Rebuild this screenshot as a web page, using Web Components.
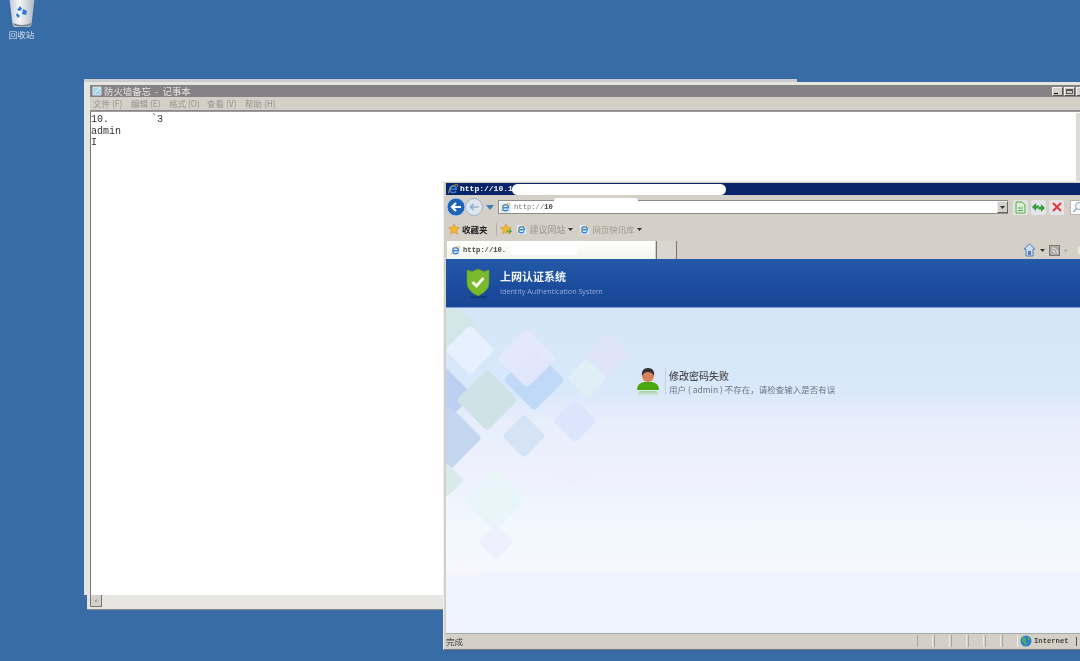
<!DOCTYPE html>
<html lang="zh">
<head>
<meta charset="utf-8">
<title>desktop</title>
<style>
  html, body { margin: 0; height: 100%; background: #376ca6; overflow: hidden; }
</style>
</head>
<body>
<win-desktop>
  <desk-icon label="回收站"></desk-icon>
  <note-window title="防火墙备忘 - 记事本">10.       `3
admin
I</note-window>
  <ie-window>
    <auth-page></auth-page>
  </ie-window>
</win-desktop>

<script>
(function() {
  const CJK = '"Noto Sans CJK SC", "Noto Sans", sans-serif';

  // the blue e with its orange swoosh, with or without a page behind it
  const ieIcon = (s, page) => `<svg width="${s}" height="${s}" viewBox="0 0 16 16" style="flex:none">
    ${page === false ? "" : '<rect x="1" y="1" width="14" height="14" rx="2" fill="#eef3f8" stroke="#b9c4d0" stroke-width=".6"/>'}
    <path d="M3.800 8.300h8.600Q12.400 4 8.200 4 3.800 4 3.800 8.600q0 4.200 4.400 4.200 2.800 0 3.900-2" fill="none" stroke="#2f86d8" stroke-width="2"/>
    <path d="M1.800 14Q3 6 10 2.800q3.400-1.600 4.200-.4.500 1-.9 3" fill="none" stroke="#e8ab3a" stroke-width="1.100"/></svg>`;

  const star = (s, extra) => `<svg width="${s}" height="${s}" viewBox="0 0 16 16" style="flex:none">
    <path d="M8 1l2.200 4.600 5 .7-3.600 3.500.9 5L8 12.400l-4.500 2.400.9-5L.8 6.300l5-.7z" fill="#f3b52c" stroke="#c88a1c" stroke-width=".6"/>${extra || ""}</svg>`;

  const arrow = `<svg width="5" height="3" viewBox="0 0 5 3" style="flex:none"><path d="M0 0h5L2.500 3z" fill="#333"/></svg>`;

  class WinDesktop extends HTMLElement {
    constructor() {
      super();
      this.attachShadow({ mode: "open" }).innerHTML = `
      <style>
      :host { display: block; position: relative; width: 1080px; height: 661px; overflow: hidden; background: #376ca6; filter: blur(.7px); }
      </style>
      <slot></slot>`;
    }
  }

  class DeskIcon extends HTMLElement {
    constructor() {
      super();
      this.attachShadow({ mode: "open" }).innerHTML = `
      <style>
      :host { position: absolute; left: 4px; top: -2px; width: 35px; display: flex; flex-direction: column; align-items: center; gap: 1px; }
      .label { font: 8.500px/10px ${CJK}; color: #d5e2f0; white-space: nowrap; }
      </style>
      <svg width="26" height="30" viewBox="0 0 26 30">
        <defs><linearGradient id="bin" x1="0" x2="1" y1="0" y2="0"><stop offset="0" stop-color="#c4ccd2"/><stop offset=".4" stop-color="#f4f7f9"/><stop offset="1" stop-color="#aeb6bd"/></linearGradient></defs>
        <path d="M.5 1h25l-3 25q-.3 3-3 3H6.500q-2.700 0-3-3z" fill="url(#bin)"/>
        <path d="M4 25q9 4 18 0l-.4 2.500q-8.600 2.500-17 0z" fill="#7d858c"/>
        <path d="M8 12l3-4 2 3-2 2zM14 11l4 2-1 4-4-1zM8 15l3 3-2 2-2-3z" fill="#2f78d0"/>
      </svg>
      <div class="label"></div>`;
    }
    connectedCallback() {
      this.shadowRoot.querySelector(".label").textContent = this.getAttribute("label");
    }
  }

  class NoteWindow extends HTMLElement {
    constructor() {
      super();
      this.attachShadow({ mode: "open" }).innerHTML = `
      <style>
      :host { position: absolute; left: 84px; top: 82px; width: 1010px; height: 528px; background: #e6e4df; box-sizing: border-box; padding: 3px 0 2px 6px; display: flex; flex-direction: column; border-bottom: 1px solid #8a8a8a; font-family: ${CJK}; }
      .sliver { position: absolute; left: 0; top: -3px; width: 713px; height: 3px; background: #c9cbd0; }
      .notch { position: absolute; left: 0; top: 513px; width: 3px; height: 15px; background: #376ca6; }
      .bar { height: 12px; background: #858285; display: flex; align-items: center; color: #e4e2e2; font-size: 9.400px; line-height: 12px; padding-left: 2px; gap: 2px; flex: none; }
      .bar .t { flex: 1; white-space: pre; margin-top: -1px; }
      .btns { display: flex; gap: 1px; padding-right: 7px; }
      .btns i { width: 11px; height: 9px; background: #d4d0c8; border: 1px solid #f2f2f2; border-right-color: #555; border-bottom-color: #555; box-sizing: border-box; display: block; position: relative; }
      .btns i.min::after { content: ""; position: absolute; left: 1px; bottom: 1px; width: 4px; height: 1px; background: #000; }
      .btns i.max::after { content: ""; position: absolute; inset: 1px; border: 1px solid #555; border-top-width: 2px; box-sizing: border-box; }
      .menu { height: 14px; flex: none; background: #d4d0c8; display: flex; align-items: center; gap: 9px; padding: 0 0 1px 3px; font-size: 8.500px; color: #96948e; border-bottom: 1px solid #8b8985; box-sizing: border-box; white-space: nowrap; }
      .menu span { width: 29px; }
      .edit { flex: 1; min-height: 0; background: #fff; border-left: 1px solid #777; border-top: 1px solid #9c9c9c; display: flex; }
      pre { margin: 0; flex: 1; padding: 2px 0 0 0; font: 10px/11.500px "Liberation Mono", monospace; color: #333; }
      .hs { height: 12px; flex: none; background: #e7e6e2; display: flex; align-items: stretch; }
      .hs b { width: 12px; border: 1px solid #777; border-top: 0; box-sizing: border-box; background: #d4d0c8; font: 6px/10px "Liberation Sans", sans-serif; color: #333; text-align: center; }
      .right { position: absolute; left: 992px; top: 31px; width: 4px; height: 480px; background: #dedcd7; }
      </style>
      <div class="sliver"></div><div class="notch"></div>
      <div class="bar">
        <svg width="10" height="10" viewBox="0 0 10 10"><path d="M1 1h8v8H1z" fill="#9fd3e6" stroke="#e8f4f8" stroke-width=".8"/><path d="M3 7L8 2" stroke="#fff" stroke-width="1"/></svg>
        <span class="t"></span>
        <div class="btns"><i class="min"></i><i class="max"></i><i></i></div>
      </div>
      <div class="menu"><span>文件 (F)</span><span>编辑 (E)</span><span>格式 (O)</span><span>查看 (V)</span><span>帮助 (H)</span></div>
      <div class="edit"><pre><slot></slot></pre></div>
      <div class="hs"><b>‹</b></div>
      <div class="right"></div>`;
    }
    connectedCallback() {
      this.shadowRoot.querySelector(".t").textContent = this.getAttribute("title").replace(" - ", "  -  ");
    }
  }

  class IeWindow extends HTMLElement {
    constructor() {
      super();
      this.attachShadow({ mode: "open" }).innerHTML = `
      <style>
      :host { position: absolute; left: 443px; top: 181px; width: 660px; height: 469px; box-sizing: border-box; padding: 1px 0 1px 2px; background: #d4d0c8; border-left: 1px solid #f0f0f0; border-top: 1px solid #f0f0f0; border-bottom: 1px solid #777; display: flex; flex-direction: column; font-family: ${CJK}; }
      .title { height: 12px; flex: none; background: #0a246a; display: flex; align-items: center; gap: 1px; color: #fff; font: bold 8px/12px "Liberation Mono", monospace; position: relative; padding-left: 1px; }
      .mask { position: absolute; background: #fff; }
      .m1 { left: 66px; top: 1px; width: 214px; height: 11px; border-radius: 6px; }
      .nav { height: 24px; flex: none; display: flex; align-items: center; padding-left: 1px; gap: 2px; position: relative; }
      .addr { width: 510px; height: 14px; box-sizing: border-box; background: #fff; border: 1px solid #8c8c8c; border-right: 0; display: flex; align-items: center; gap: 3px; padding-left: 1px; font: 7.200px/12px "Liberation Mono", monospace; color: #777; position: relative; margin-left: 1px; }
      .addr b { color: #444; }
      .addr .drop { position: absolute; right: 0; top: 0; width: 11px; height: 12px; background: #d4d0c8; border: 1px solid #666; border-top-color: #eee; border-left-color: #eee; box-sizing: border-box; display: flex; align-items: center; justify-content: center; }
      .m2 { left: 55px; top: -3px; width: 84px; height: 4px; border-radius: 3px 3px 0 0; }
      .tool { width: 15px; height: 15px; background: #e3e4e8; border-radius: 2px; display: flex; align-items: center; justify-content: center; flex: none; margin-left: 1px; }
      .tool.first { margin-left: 3px; }
      .search { margin-left: 4px; width: 30px; height: 15px; background: #fff; border: 1px solid #b5b5b5; box-sizing: border-box; display: flex; align-items: center; padding-left: 1px; flex: none; }
      .favs { height: 20px; flex: none; display: flex; align-items: center; font-size: 9px; white-space: nowrap; color: #9a9892; padding-left: 2px; }
      .favs .strong { color: #222; font-size: 8.500px; font-weight: 700; margin: 0 8px 0 0; }
      .favs .sep { width: 1px; height: 13px; background: #b5b2aa; margin-right: 3px; }
      .favs .narrow { font-size: 8.400px; }
      .tabs { height: 20px; flex: none; display: flex; align-items: flex-end; padding-left: 1px; box-sizing: border-box; }
      .tab { width: 208px; height: 18px; background: linear-gradient(#fff, #f4f3f0); display: flex; align-items: center; gap: 2px; font: bold 7.200px/12px "Liberation Mono", monospace; color: #444; padding-left: 3px; box-sizing: border-box; position: relative; flex: none; }
      .m3 { left: 64px; top: 3px; width: 67px; height: 11px; border-radius: 4px; }
      .newtab { width: 21px; height: 18px; box-sizing: border-box; border: 1px solid #77756f; border-width: 0 1px; margin-left: 1px; background: #d9d6cf; flex: none; }
      .tabtools { display: flex; align-items: center; gap: 4px; margin-left: 346px; height: 18px; }
      .tabtools u { width: 5px; height: 7px; background: #e8e7e3; margin-left: 6px; flex: none; }
      .page { flex: 1; min-height: 0; display: flex; flex-direction: column; }
      .status { height: 14px; flex: none; display: flex; align-items: center; font-size: 8.500px; color: #444; border-top: 1px solid #aaa; }
      .status .done { width: 471px; flex: none; }
      .status .cell { width: 16px; height: 12px; box-sizing: border-box; border-left: 1px solid #a8a6a0; border-right: 1px solid #ecebe7; margin-right: 1px; flex: none; }
      .status .net { display: flex; align-items: center; gap: 2px; margin-left: 1px; font: bold 7.200px/12px "Liberation Mono", monospace; white-space: nowrap; }
      .status .net i { width: 1px; height: 9px; background: #555; margin-left: 5px; }
      </style>
      <div class="title">${ieIcon(12, false)}<span>http://10.1</span><div class="mask m1"></div></div>
      <div class="nav">
        <svg width="36" height="22" viewBox="0 0 36 22" style="flex:none">
          <circle cx="27" cy="11" r="8.500" fill="#dde6ee" stroke="#9fb2c4"/><path d="M31.500 11h-8m3-3l-3 3 3 3" fill="none" stroke="#8fb0cc" stroke-width="1.600"/>
          <circle cx="9" cy="11" r="9" fill="#1d63b8" stroke="#bcd0e6"/><path d="M14 11H5m4-4l-4 4 4 4" fill="none" stroke="#fff" stroke-width="2.200"/>
        </svg>
        <svg width="8" height="5" viewBox="0 0 8 5" style="flex:none;margin:0 1px"><path d="M0 0h8L4 5z" fill="#3f7fb8"/></svg>
        <div class="addr">${ieIcon(11)}<span>http://<b>10</b></span><div class="mask m2"></div>
          <div class="drop">${arrow}</div></div>
        <div class="tool first"><svg width="11" height="13" viewBox="0 0 11 13"><path d="M1 1h6l3 3v8H1z" fill="#d9efd4" stroke="#58a84e"/><path d="M3 7h5M3 9.500h5" stroke="#58a84e"/></svg></div>
        <div class="tool"><svg width="13" height="11" viewBox="0 0 13 11"><path d="M0 5l4-4v2.500h3v3H4V9zM13 6L9 2v2.500H6.500v3H9V10z" fill="#2f9e3b"/></svg></div>
        <div class="tool"><svg width="10" height="10" viewBox="0 0 10 10"><path d="M1 1l8 8M9 1l-8 8" stroke="#e0383a" stroke-width="2"/></svg></div>
        <div class="search"><svg width="12" height="12" viewBox="0 0 12 12"><circle cx="7" cy="5" r="3.500" fill="#eef4fb" stroke="#8da9c4"/><path d="M4.500 7.500L1.500 11" stroke="#8da9c4" stroke-width="1.400"/></svg></div>
      </div>
      <div class="favs">
        ${star(12)}<span class="strong" style="margin-left:2px">收藏夹</span><span class="sep"></span>
        ${star(12, '<path d="M9 11h6m-2.500-2.500L15 11l-2.500 2.500" stroke="#3aa33a" stroke-width="1.600" fill="none"/>')}
        <span style="width:4px"></span>${ieIcon(11)}<span style="margin:0 2px 0 3px">建议网站</span>${arrow}
        <span style="width:6px"></span>${ieIcon(11)}<span class="narrow" style="margin:0 3px 0 3px">网页快讯库</span>${arrow}
      </div>
      <div class="tabs">
        <div class="tab">${ieIcon(11, false)}<span>http://10.</span><div class="mask m3"></div></div>
        <div class="newtab"></div>
        <div class="tabtools">
          <svg width="13" height="14" viewBox="0 0 13 14" style="flex:none"><path d="M6.500 1L1 6h2v7h7V6h2z" fill="#cfdcec" stroke="#4f7fb8"/><rect x="5" y="8" width="3" height="4" fill="#4f7fb8"/></svg>${arrow}
          <svg width="11" height="11" viewBox="0 0 11 11" style="flex:none"><rect x=".5" y=".5" width="10" height="10" fill="#a9a8a4" stroke="#777"/><path d="M3 8.500h.5M3 5.500q3 0 3 3M3 3q5.500 0 5.500 5.500" fill="none" stroke="#eee"/></svg>
          <span style="color:#aaa;font-size:7px">▾</span><u></u>
        </div>
      </div>
      <div class="page"><slot></slot></div>
      <div class="status">
        <span class="done">完成</span>
        <span class="cell"></span><span class="cell"></span><span class="cell"></span><span class="cell"></span><span class="cell"></span><span class="cell"></span>
        <span class="net"><svg width="12" height="12" viewBox="0 0 12 12"><circle cx="6" cy="6" r="5.500" fill="#2f7fc8"/><path d="M3 2l3 1-1 3 2 2-1 3-2-3-2-2zM8 2l2 2v2L8 5z" fill="#58ad58"/></svg>Internet<i></i></span>
      </div>`;
    }
  }

  class AuthPage extends HTMLElement {
    constructor() {
      super();
      const tiles = [
        [453,330,28,"#d3e6e8"],[470,350,25,"#e6f0fe"],[443,395,30,"#bcd0f2"],[534,380,31,"#bfd9f6"],
        [527,358,30,"#e6e8fd",.85],[487,400,31,"#cfe2e6"],[450,438,32,"#c4d6f0"],[524,436,22,"#d5e3f4"],
        [575,421,22,"#dbe6fd"],[608,355,22,"#e0e4fb"],[587,378,20,"#e0eff5"],[572,470,18,"#eeeffc"],
        [495,500,31,"#e8f5f9"],[496,542,18,"#eef1fd"],[447,480,17,"#d8eaea"],[463,577,18,"#f9f5fc"]
      ].map(([x, y, r, c, o]) => {
        const s = r * 1.414, px = x - 446, py = y - 308;
        return `<rect x="${px - s / 2}" y="${py - s / 2}" width="${s}" height="${s}" rx="4" fill="${c}" opacity="${o || 1}" transform="rotate(45 ${px} ${py})"/>`;
      }).join("");
      this.attachShadow({ mode: "open" }).innerHTML = `
      <style>
      :host { display: flex; flex-direction: column; flex: 1; min-height: 0; font-family: ${CJK}; }
      .banner { height: 49px; flex: none; background: linear-gradient(#2259a8, #1c4a9b 70%, #1a4595); border-bottom: 1px solid #7f9fd0; display: flex; align-items: center; gap: 10px; padding-left: 20px; box-sizing: border-box; }
      .names { display: flex; flex-direction: column; gap: 3px; margin-top: -2px; }
      .names b { font-size: 11px; line-height: 14px; color: #f0f4fb; font-weight: 700; }
      .names span { font: 7.200px/10px "Open Sans", "Noto Sans", sans-serif; color: #92aed8; white-space: nowrap; }
      .body { flex: 1; min-height: 0; position: relative; background: linear-gradient(#d5e6f8 0, #d9e8fb 26%, #e1ebfb 30%, #e8eefc 36%, #eef1fd 50%, #eff3fd 58%, #f0f8fe 66%, #f6f8fe 81%, #eff3fd 81.500%, #eff3fd 100%); display: flex; }
      .tiles { position: absolute; left: 0; top: 0; }
      .msg { position: relative; margin: 60px 0 0 190px; display: flex; align-items: flex-start; gap: 3px; height: 30px; }
      .rule { width: 1px; height: 27px; background: #c3cfe3; flex: none; margin-left: 2px; }
      .person { flex: none; margin-top: -1px; }
      .txt { display: flex; flex-direction: column; gap: 0; white-space: nowrap; margin-top: 1px; }
      .txt b { font-size: 10px; line-height: 14px; color: #4a4c50; font-weight: 500; }
      .txt span { font-size: 8.500px; line-height: 13px; color: #6f767f; }
      </style>
      <div class="banner">
        <svg width="24" height="31" viewBox="0 0 24 31" style="flex:none">
          <ellipse cx="12" cy="29" rx="9" ry="1.500" fill="#123a78"/>
          <path d="M1 2l5 1.500L12 1l6 2.500L23 2v13q0 8-11 13Q1 23 1 15z" fill="#7ab82e" stroke="#5a9f1e" stroke-width=".6"/>
          <path d="M6.500 14l4 4 7-8" fill="none" stroke="#f2f8e8" stroke-width="2.800"/>
        </svg>
        <div class="names"><b>上网认证系统</b><span>Identity Authentication System</span></div>
      </div>
      <div class="body">
        <svg class="tiles" width="660" height="267" viewBox="0 0 660 267"><g>${tiles}</g></svg>
        <div class="msg">
          <svg class="person" width="24" height="32" viewBox="0 0 24 32">
            <defs><linearGradient id="refl" x1="0" x2="0" y1="0" y2="1"><stop offset="0" stop-color="#9fd08a"/><stop offset="1" stop-color="#e3eefa" stop-opacity="0"/></linearGradient></defs>
            <path d="M1 23q0-7 7-8h8q7 1 7 8z" fill="#4aa80f"/>
            <rect x="2" y="24" width="20" height="7" rx="3" fill="url(#refl)"/>
            <circle cx="12" cy="9" r="6" fill="#d9825a"/>
            <path d="M6 9q-1-8 6-8t6 8q-2-4-6-4T6 9z" fill="#33312f"/>
          </svg>
          <div class="rule"></div>
          <div class="txt"><b>修改密码失败</b><span>用户 ( admin ) 不存在，请检查输入是否有误</span></div>
        </div>
      </div>`;
    }
  }

  customElements.define("win-desktop", WinDesktop);
  customElements.define("desk-icon", DeskIcon);
  customElements.define("note-window", NoteWindow);
  customElements.define("ie-window", IeWindow);
  customElements.define("auth-page", AuthPage);
})();
</script>
</body>
</html>
